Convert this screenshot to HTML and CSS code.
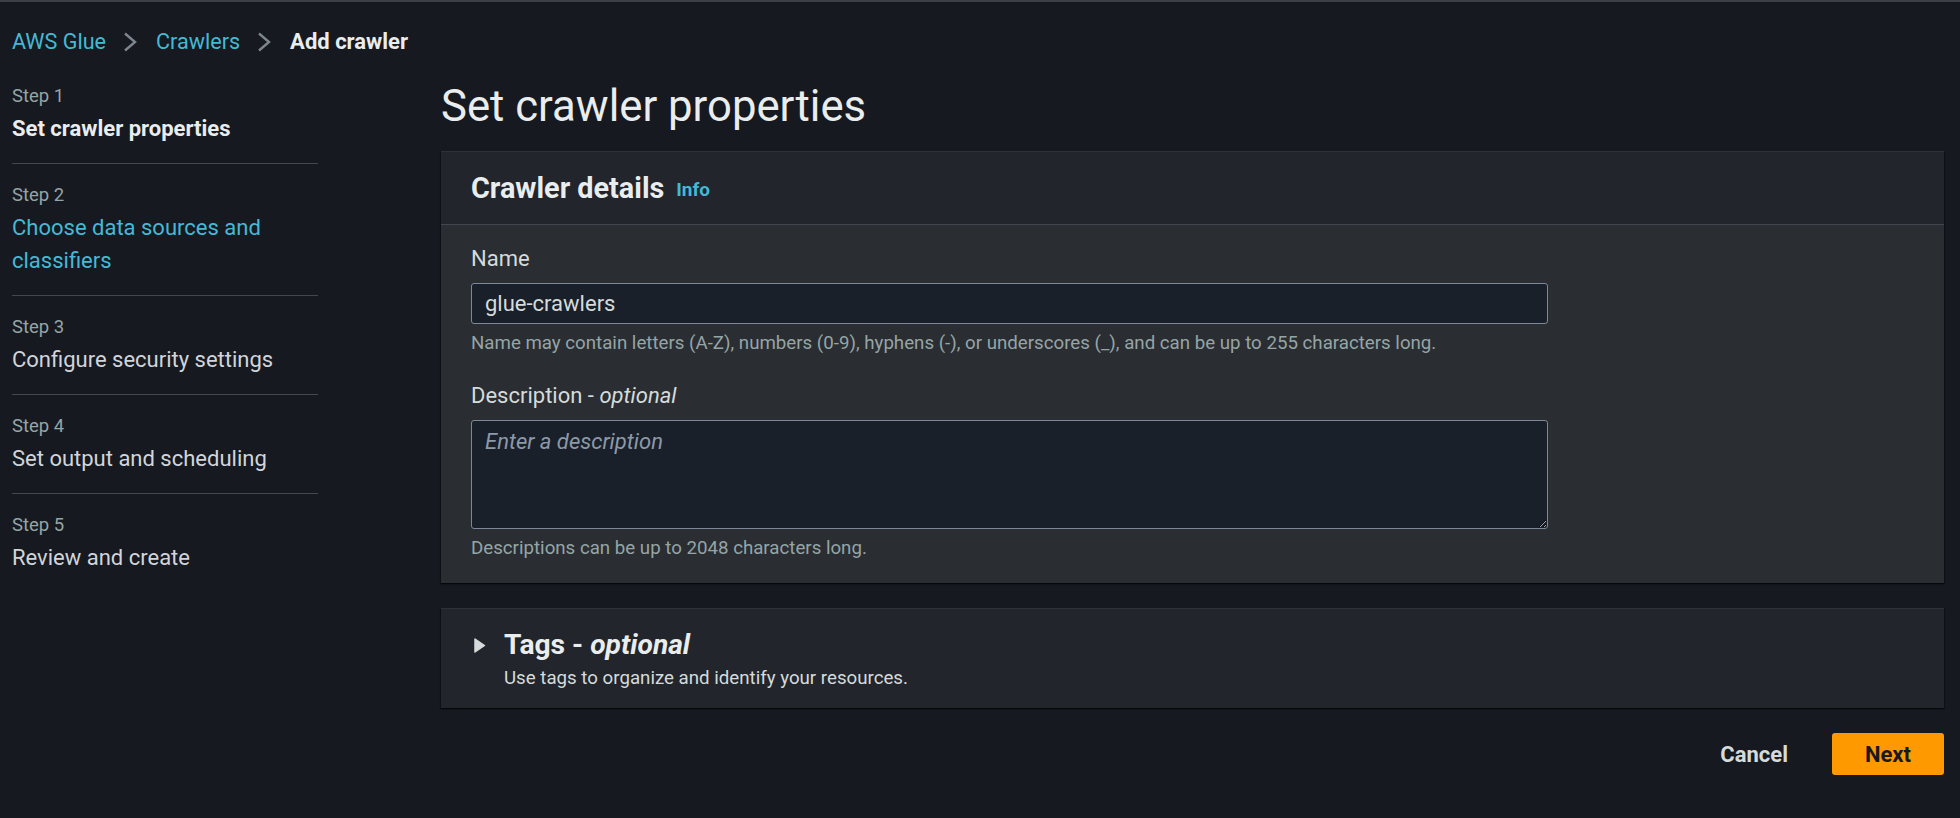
FILE: index.html
```html
<!DOCTYPE html>
<html lang="en">
<head>
<meta charset="utf-8">
<title>Add crawler</title>
<link rel="stylesheet" href="styles.css">
</head>
<body>
<div class="topline"></div>
<nav class="crumbs">
  <a class="crumb-link">AWS Glue</a>
  <svg class="chev" viewBox="0 0 14 20"><polyline points="2,1.5 12,10 2,18.5"/></svg>
  <a class="crumb-link">Crawlers</a>
  <svg class="chev" viewBox="0 0 14 20"><polyline points="2,1.5 12,10 2,18.5"/></svg>
  <span class="crumb-current">Add crawler</span>
</nav>
<div class="layout">
  <aside class="steps">
    <div class="step">
      <div class="step-num">Step 1</div>
      <div class="step-title active">Set crawler properties</div>
    </div>
    <div class="step">
      <div class="step-num">Step 2</div>
      <div class="step-title link">Choose data sources and classifiers</div>
    </div>
    <div class="step">
      <div class="step-num">Step 3</div>
      <div class="step-title">Configure security settings</div>
    </div>
    <div class="step">
      <div class="step-num">Step 4</div>
      <div class="step-title">Set output and scheduling</div>
    </div>
    <div class="step">
      <div class="step-num">Step 5</div>
      <div class="step-title">Review and create</div>
    </div>
  </aside>
  <main class="main">
    <h1>Set crawler properties</h1>
    <section class="card">
      <header class="card-head">
        <h2>Crawler details</h2>
        <a class="info">Info</a>
      </header>
      <div class="card-body">
        <div class="field">
          <label class="label" for="name">Name</label>
          <input class="input" id="name" type="text" value="glue-crawlers">
          <div class="hint">Name may contain letters (A-Z), numbers (0-9), hyphens (-), or underscores (_), and can be up to 255 characters long.</div>
        </div>
        <div class="field">
          <label class="label" for="desc">Description - <i>optional</i></label>
          <textarea class="textarea" id="desc" placeholder="Enter a description"></textarea>
          <div class="hint">Descriptions can be up to 2048 characters long.</div>
        </div>
      </div>
    </section>
    <section class="card tags">
      <svg class="caret" viewBox="0 0 13 17"><polygon points="2,2 11.5,8.5 2,15"/></svg>
      <div class="tags-text">
        <h2 class="tags-title">Tags - <i>optional</i></h2>
        <div class="tags-sub">Use tags to organize and identify your resources.</div>
      </div>
    </section>
    <div class="actions">
      <button class="btn-link" type="button">Cancel</button>
      <button class="btn-primary" type="button">Next</button>
    </div>
  </main>
</div>
</body>
</html>
```
FILE: styles.css
```css
* { box-sizing: border-box; }
html, body { margin: 0; padding: 0; }
body {
  background: #16191f;
  font-family: Roboto, "Open Sans", sans-serif;
  color: #d5dbdb;
  width: 1960px;
  height: 818px;
  overflow: hidden;
}
.topline { height: 2px; background: #3b4048; }

.crumbs {
  display: flex;
  align-items: center;
  height: 28px;
  margin: 26px 0 0 12px;
  font-size: 21.6px;
  line-height: 28px;
}
.crumb-link { color: #44b9d6; text-decoration: none; }
.chev {
  width: 14px;
  height: 20px;
  margin: 0 19px 0 17px;
  fill: none;
  stroke: #7d8590;
  stroke-width: 2.4;
}
.crumb-current { color: #eaeded; font-weight: 700; font-size: 22px; }

.layout {
  display: grid;
  grid-template-columns: 306px 1503px;
  column-gap: 123px;
  padding-left: 12px;
  margin-top: 24px;
}

.step { padding: 16px 0 18px; border-bottom: 1px solid #414750; }
.step:first-child { padding-top: 1px; }
.step:last-child { border-bottom: none; }
.step-num { font-size: 18.5px; line-height: 30px; color: #95a5a6; }
.step-title { padding-top: 1px; font-size: 22px; line-height: 33px; color: #d1d5db; }
.step-title.active { font-weight: 700; color: #eaeded; }
.step-title.link { color: #44b9d6; }

.main h1 {
  margin: 0 0 19px;
  font-size: 43.7px;
  line-height: 52px;
  font-weight: 400;
  color: #eaeded;
}

.card {
  background: #22252b;
  border-top: 1px solid #2e3238;
  box-shadow: 0 1px 1px 0 rgba(0, 0, 0, 0.45), 1px 1px 1px 0 rgba(0, 0, 0, 0.25), -1px 1px 1px 0 rgba(0, 0, 0, 0.25);
}
.card-head {
  display: flex;
  align-items: center;
  padding: 0 30px;
  height: 73px;
  border-bottom: 1px solid #414750;
}
.card-head h2 {
  margin: 0;
  font-size: 28.8px;
  line-height: 32px;
  font-weight: 700;
  color: #eaeded;
}
.info {
  margin: 3px 0 0 12px;
  font-size: 19px;
  line-height: 24px;
  font-weight: 700;
  color: #44b9d6;
}
.card-body {
  background: #2a2d32;
  padding: 20px 30px 22px;
}
.field + .field { margin-top: 26px; }
.label {
  display: block;
  font-size: 22px;
  line-height: 28px;
  margin-bottom: 10px;
  color: #d5dbdb;
}
.input, .textarea {
  display: block;
  width: 1077px;
  background: #19202a;
  border: 1px solid #7d8998;
  border-radius: 3px;
  color: #d5dbdb;
  font-family: inherit;
  font-size: 22px;
  padding: 0 13px;
  outline: none;
  margin: 0;
}
.input { height: 41px; }
.textarea { height: 109px; padding: 7px 13px; line-height: 28px; resize: both; }
.textarea::placeholder { color: #8d99a8; font-style: italic; }
.hint {
  margin-top: 6px;
  font-size: 18.7px;
  line-height: 26px;
  color: #95a5a6;
}

.tags {
  margin-top: 25px;
  display: flex;
  align-items: flex-start;
  padding: 20px 30px 17px;
}
.caret {
  flex: none;
  width: 13px;
  height: 17px;
  margin: 8px 18px 0 2px;
  fill: #d5dbdb;
  stroke: #d5dbdb;
  stroke-width: 1.5;
  stroke-linejoin: round;
}
.tags-title {
  margin: 0;
  font-size: 28.2px;
  line-height: 32px;
  font-weight: 700;
  color: #eaeded;
}
.tags-sub {
  margin-top: 4px;
  font-size: 18.7px;
  line-height: 26px;
  color: #d5dbdb;
}

.actions {
  display: flex;
  justify-content: flex-end;
  align-items: center;
  margin-top: 25px;
}
.btn-link, .btn-primary {
  font-family: inherit;
  font-size: 22px;
  font-weight: 700;
  height: 42px;
  border: none;
  cursor: pointer;
}
.btn-link { background: none; color: #d5dbdb; padding: 0 22px; margin-right: 22px; }
.btn-primary {
  width: 112px;
  background: #ff9900;
  color: #16191f;
  border-radius: 3px;
}
```
